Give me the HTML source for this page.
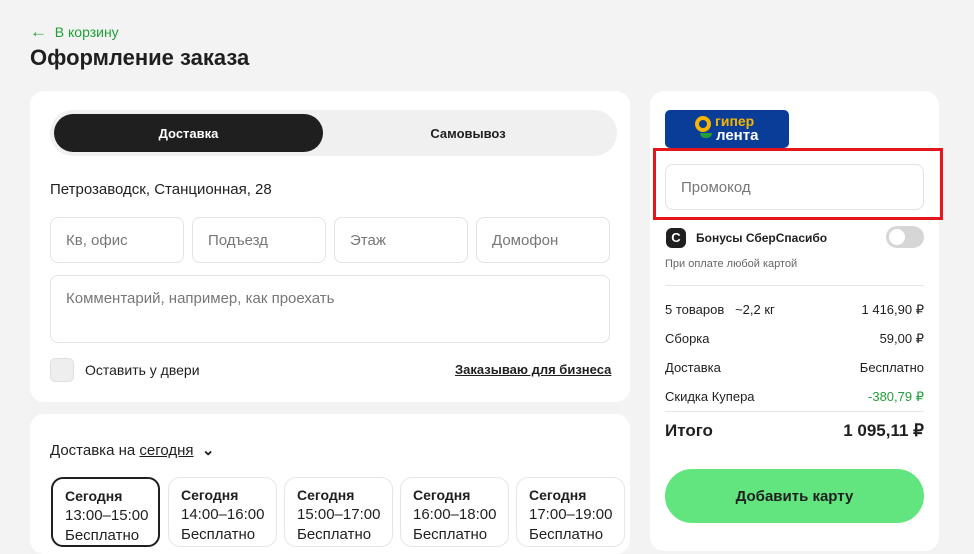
<!DOCTYPE html>
<html><head><meta charset="utf-8"><style>
*{box-sizing:border-box;margin:0;padding:0}
body{width:974px;height:531px;overflow:hidden;background:#f3f3f3;font-family:"Liberation Sans",sans-serif;color:#1f1f1f;position:relative}
.a{position:absolute}
.card{position:absolute;background:#fff;border-radius:14px}
.inp{position:absolute;border:1px solid #e3e3e3;border-radius:8px;color:#777;font-size:15px;padding-left:15px;display:flex;align-items:center}
.slot{position:absolute;top:477px;width:109px;height:70px;border:1px solid #e6e6e6;border-radius:12px;padding:7px 0 0 12px;font-size:15px;line-height:20px}
.slot b{font-size:14px;display:block}
.row{position:absolute;left:665px;width:259px;font-size:13px;display:flex;justify-content:space-between}
</style></head><body>
<div class="a" style="left:30px;top:24px;color:#21a038;font-size:14px"><b style="font-size:17px;line-height:14px">&#8592;</b>&nbsp; В корзину</div>
<div class="a" style="left:30px;top:45px;font-size:22px;font-weight:bold">Оформление заказа</div>

<div class="card" style="left:30px;top:91px;width:600px;height:311px"></div>
<div class="a" style="left:50px;top:110px;width:567px;height:46px;background:#f0f0f0;border-radius:23px"></div>
<div class="a" style="left:54px;top:114px;width:269px;height:38px;background:#1f1f1f;border-radius:19px;color:#fff;font-size:13px;font-weight:bold;display:flex;align-items:center;justify-content:center">Доставка</div>
<div class="a" style="left:323px;top:114px;width:290px;height:38px;font-size:13px;font-weight:bold;display:flex;align-items:center;justify-content:center">Самовывоз</div>
<div class="a" style="left:50px;top:181px;font-size:15px">Петрозаводск, Станционная, 28</div>
<div class="inp" style="left:50px;top:217px;width:134px;height:46px">Кв, офис</div>
<div class="inp" style="left:192px;top:217px;width:134px;height:46px">Подъезд</div>
<div class="inp" style="left:334px;top:217px;width:134px;height:46px">Этаж</div>
<div class="inp" style="left:476px;top:217px;width:134px;height:46px">Домофон</div>
<div class="inp" style="left:50px;top:275px;width:560px;height:68px;align-items:flex-start;padding-top:14px">Комментарий, например, как проехать</div>
<div class="a" style="left:50px;top:358px;width:24px;height:24px;background:#eee;border-radius:5px;border:1px solid #e0e0e0"></div>
<div class="a" style="left:85px;top:362px;font-size:14px">Оставить у двери</div>
<div class="a" style="left:455px;top:362px;font-size:13px;font-weight:bold;text-decoration:underline">Заказываю для бизнеса</div>

<div class="card" style="left:30px;top:414px;width:600px;height:140px"></div>
<div class="a" style="left:50px;top:441px;font-size:15px">Доставка на <u>сегодня</u> &nbsp;<b>&#8964;</b></div>
<div class="slot" style="left:51px;border:2px solid #1f1f1f"><b>Сегодня</b>13:00–15:00<br>Бесплатно</div>
<div class="slot" style="left:168px"><b>Сегодня</b>14:00–16:00<br>Бесплатно</div>
<div class="slot" style="left:284px"><b>Сегодня</b>15:00–17:00<br>Бесплатно</div>
<div class="slot" style="left:400px"><b>Сегодня</b>16:00–18:00<br>Бесплатно</div>
<div class="slot" style="left:516px"><b>Сегодня</b>17:00–19:00<br>Бесплатно</div>

<div class="card" style="left:650px;top:91px;width:289px;height:460px"></div>
<div class="a" style="left:665px;top:110px;width:124px;height:38px;background:#0a3d97;border-radius:5px"></div>
<div class="a" style="left:695px;top:116px;width:16px;height:16px;border:4px solid #f7b500;border-radius:50%"></div>
<div class="a" style="left:700px;top:133px;width:12px;height:5px;background:#21a038;border-radius:0 0 6px 6px"></div>
<div class="a" style="left:715px;top:114px;color:#f7b500;font-size:14px;font-weight:bold;line-height:14px">гипер</div>
<div class="a" style="left:716px;top:128px;color:#fff;font-size:15px;font-weight:bold;line-height:15px">лента</div>
<div class="a" style="left:653px;top:148px;width:290px;height:72px;border:3px solid #e4161b"></div>
<div class="inp" style="left:665px;top:164px;width:259px;height:46px;font-size:15px">Промокод</div>
<div class="a" style="left:666px;top:228px;width:20px;height:20px;background:#1f1f1f;border-radius:6px;color:#fff;font-size:13px;font-weight:bold;text-align:center;line-height:20px">C</div>
<div class="a" style="left:696px;top:231px;font-size:12px;font-weight:bold">Бонусы СберСпасибо</div>
<div class="a" style="left:886px;top:226px;width:38px;height:22px;background:#d6d6d6;border-radius:11px"><div class="a" style="left:3px;top:3px;width:16px;height:16px;background:#fff;border-radius:50%"></div></div>
<div class="a" style="left:665px;top:258px;font-size:11px;color:#666">При оплате любой картой</div>
<div class="a" style="left:665px;top:285px;width:259px;height:1px;background:#e6e6e6"></div>
<div class="row" style="top:302px"><span>5 товаров &nbsp;&nbsp;~2,2 кг</span><span>1 416,90 ₽</span></div>
<div class="row" style="top:331px"><span>Сборка</span><span>59,00 ₽</span></div>
<div class="row" style="top:360px"><span>Доставка</span><span>Бесплатно</span></div>
<div class="row" style="top:389px"><span>Скидка Купера</span><span style="color:#21a038">-380,79 ₽</span></div>
<div class="a" style="left:665px;top:411px;width:259px;height:1px;background:#e6e6e6"></div>
<div class="row" style="top:421px;font-size:17px;font-weight:bold"><span>Итого</span><span>1 095,11 ₽</span></div>
<div class="a" style="left:665px;top:469px;width:259px;height:54px;background:#62e57e;border-radius:27px;font-size:15px;font-weight:bold;display:flex;align-items:center;justify-content:center">Добавить карту</div>
</body></html>
